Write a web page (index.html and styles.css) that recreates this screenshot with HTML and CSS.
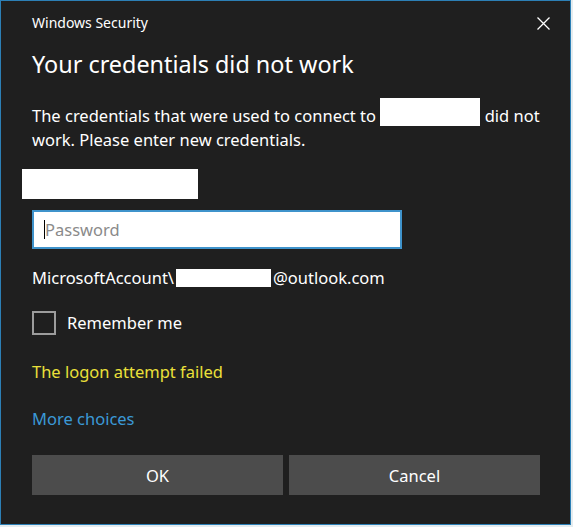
FILE: index.html
```html
<!DOCTYPE html>
<html>
<head>
<meta charset="utf-8">
<link rel="stylesheet" href="styles.css">
</head>
<body>
<div class="window">
  <div class="titlebar">
    <span class="app">Windows Security</span>
    <span class="close"><svg width="13" height="13" viewBox="0 0 13 13"><path d="M0.5 0.5 L12.5 12.5 M12.5 0.5 L0.5 12.5" stroke="#ffffff" stroke-width="1.3" fill="none"/></svg></span>
  </div>
  <div class="content">
    <h1 class="heading">Your credentials did not work</h1>
    <p class="msg">The credentials that were used to connect to <span class="redact r1"></span> did not<br>work. Please enter new credentials.</p>
    <div class="redact r2"></div>
    <div class="input"><span class="caret"></span><span class="ph">Password</span></div>
    <div class="account">MicrosoftAccount\<span class="redact r3"></span>@outlook.com</div>
    <div class="remember"><span class="box"></span><span class="rlabel">Remember me</span></div>
    <div class="error">The logon attempt failed</div>
    <div class="more">More choices</div>
    <div class="buttons"><span class="btn">OK</span><span class="btn">Cancel</span></div>
  </div>
</div>
</body>
</html>
```

FILE: styles.css
```css
html, body { margin: 0; padding: 0; }
body {
  background: #e4ecef;
  width: 573px;
  height: 527px;
  overflow: hidden;
  font-family: "Noto Sans", "Open Sans", sans-serif;
  color: #ffffff;
}
.window {
  width: 569px;
  height: 523px;
  background: #1f1f1f;
  border: 1px solid #2c7fb5;
  box-sizing: content-box;
}
.titlebar {
  display: flex;
  justify-content: space-between;
  align-items: flex-start;
  padding: 12px 20px 0 31px;
  height: 22px;
}
.app {
  font-size: 14px;
  line-height: 20px;
}
.close {
  display: block;
  width: 13px;
  height: 13px;
  margin-top: 4px;
}
.close svg { display: block; }
.content {
  padding: 0 29px 0 31px;
}
.heading {
  margin: 13px 0 0;
  font-size: 23.4px;
  line-height: 32px;
  font-weight: normal;
}
.msg {
  margin: 24px 0 0;
  font-size: 16.5px;
  line-height: 24px;
}
.redact { background: #ffffff; }
.r1 {
  display: inline-block;
  width: 100px;
  height: 28px;
  vertical-align: -4px;
  margin-top: -6px;
}
.r2 {
  margin: 17px 0 0 -10px;
  width: 176px;
  height: 30px;
}
.input {
  margin-top: 11px;
  width: 370px;
  height: 39px;
  box-sizing: border-box;
  border: 2px solid #3f93cb;
  background: #ffffff;
  display: flex;
  align-items: center;
  padding-left: 10px;
}
.caret {
  width: 1px;
  height: 19px;
  background: #000000;
}
.ph {
  color: #8a8a8a;
  font-size: 16.5px;
}
.account {
  margin-top: 17px;
  font-size: 16.5px;
  line-height: 24px;
}
.r3 {
  display: inline-block;
  width: 95px;
  height: 18px;
  vertical-align: -3px;
  margin: 0 2px 0 2px;
}
.remember {
  margin-top: 21px;
  display: flex;
  align-items: center;
  height: 24px;
}
.box {
  width: 24px;
  height: 24px;
  box-sizing: border-box;
  border: 2px solid #9c9c9c;
  background: #1f1f1f;
  margin-right: 11px;
}
.rlabel {
  font-size: 16.5px;
  line-height: 24px;
}
.error {
  margin-top: 25px;
  font-size: 16.5px;
  line-height: 24px;
  color: #ebe03a;
}
.more {
  margin-top: 23px;
  font-size: 16.5px;
  line-height: 24px;
  color: #3b99d6;
}
.buttons {
  margin-top: 24px;
  display: grid;
  grid-template-columns: 251px 251px;
  column-gap: 6px;
}
.btn {
  height: 40px;
  background: #4c4c4c;
  display: flex;
  align-items: center;
  justify-content: center;
  font-size: 16.5px;
}
```
